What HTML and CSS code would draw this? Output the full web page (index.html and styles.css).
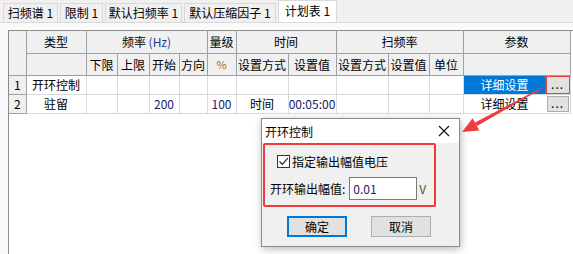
FILE: index.html
```html
<!DOCTYPE html>
<html lang="zh">
<head>
    <meta charset="UTF-8">
    <meta name="viewport" content="width=device-width, initial-scale=1.0">
    <title>计划表</title>
    <link rel="stylesheet" href="styles.css">
</head>
<body>
    <div class="tabs">
        <div class="tab t1">扫频谱 1</div>
        <div class="tab t2">限制 1</div>
        <div class="tab t3">默认扫频率 1</div>
        <div class="tab t4">默认压缩因子 1</div>
        <div class="tab t5 active">计划表 1</div>
    </div>

    <div class="panel">
        <div class="grid">
            <table class="sheet">
                <colgroup>
                    <col class="w-num">
                    <col class="w-type">
                    <col class="w-lo">
                    <col class="w-hi">
                    <col class="w-start">
                    <col class="w-dir">
                    <col class="w-lvl">
                    <col class="w-mode">
                    <col class="w-val">
                    <col class="w-mode">
                    <col class="w-val2">
                    <col class="w-unit">
                    <col class="w-param">
                </colgroup>
                <thead>
                    <tr class="hrow">
                        <th rowspan="2"></th>
                        <th>类型</th>
                        <th colspan="4">频率 <span class="hz">(Hz)</span></th>
                        <th>量级</th>
                        <th colspan="2">时间</th>
                        <th colspan="3">扫频率</th>
                        <th>参数</th>
                    </tr>
                    <tr class="hrow">
                        <th></th>
                        <th>下限</th>
                        <th>上限</th>
                        <th>开始</th>
                        <th>方向</th>
                        <th class="pct">%</th>
                        <th>设置方式</th>
                        <th>设置值</th>
                        <th>设置方式</th>
                        <th>设置值</th>
                        <th>单位</th>
                        <th></th>
                    </tr>
                </thead>
                <tbody>
                    <tr class="brow">
                        <td class="num">1</td>
                        <td>开环控制</td>
                        <td></td><td></td><td></td><td></td><td></td>
                        <td></td><td></td><td></td><td></td><td></td>
                        <td class="param">
                            <div class="param-in">
                                <span class="ptext selected">详细设置</span>
                                <span class="more marked">...</span>
                            </div>
                        </td>
                    </tr>
                    <tr class="brow">
                        <td class="num">2</td>
                        <td>驻留</td>
                        <td></td><td></td>
                        <td class="digits">200</td>
                        <td></td>
                        <td class="digits">100</td>
                        <td>时间</td>
                        <td class="digits">00:05:00</td>
                        <td></td><td></td><td></td>
                        <td class="param">
                            <div class="param-in">
                                <span class="ptext">详细设置</span>
                                <span class="more">...</span>
                            </div>
                        </td>
                    </tr>
                </tbody>
            </table>
        </div>
    </div>

    <!-- 弹出的对话框 -->
    <div class="dialog">
        <div class="dlg-title">
            <span>开环控制</span>
            <svg class="close" width="12" height="12" viewBox="0 0 12 12">
                <path d="M1 1 L11 11 M11 1 L1 11" stroke="#111" stroke-width="1.1" fill="none"/>
            </svg>
        </div>
        <div class="dlg-body">
            <div class="group">
                <div class="check">
                    <span class="box">
                        <svg width="11" height="11" viewBox="0 0 11 11">
                            <path d="M1.5 5.5 L4.3 8.3 L9.8 2.2" stroke="#222" stroke-width="1.2" fill="none"/>
                        </svg>
                    </span>
                    <span>指定输出幅值电压</span>
                </div>
                <div class="field">
                    <span>开环输出幅值:</span>
                    <span class="input">0.01</span>
                    <span class="volt">V</span>
                </div>
            </div>
            <div class="buttons">
                <span class="btn primary">确定</span>
                <span class="btn">取消</span>
            </div>
        </div>
    </div>

    <!-- 标注箭头 -->
    <svg class="arrow" width="573" height="254" viewBox="0 0 573 254">
        <polygon points="542.2,88.4 541.8,87.6 475,122.5 477,126.1" fill="#ef3b3b"/>
        <polygon points="462,132 479.4,130.4 472.6,118.2" fill="#ef3b3b"/>
    </svg>
</body>
</html>
```

FILE: styles.css
```css
* {
    box-sizing: border-box;
}
body {
    margin: 0;
    width: 573px;
    height: 254px;
    overflow: hidden;
    background-color: #f0f0f0;
    font-family: "Noto Sans CJK SC", "Noto Sans", sans-serif;
    font-size: 12px;
    color: #000;
    position: relative;
}

/* 标签页 */
.tabs {
    display: flex;
    gap: 2px;
    padding-left: 3px;
    height: 22px;
    align-items: flex-end;
}
.tab {
    height: 19px;
    line-height: 17px;
    text-align: center;
    background-color: #f0f0f0;
    border: 1px solid #d9d9d9;
    border-bottom: none;
}
.tab.active {
    height: 22px;
    line-height: 20px;
    background-color: #fff;
}
.t1 { width: 55px; }
.t2 { width: 43px; }
.t3 { width: 77px; }
.t4 { width: 92px; }
.t5 { width: 59px; }

.panel {
    background-color: #fafafa;
    border-top: 1px solid #d9d9d9;
    padding: 7px 0 0 8px;
    height: 232px;
}
.grid {
    background-color: #fff;
    height: 100%;
    border-left: 1px solid #8c8c8c;
    border-top: 1px solid #8c8c8c;
}

/* 表格 */
.sheet {
    border-collapse: collapse;
    table-layout: fixed;
    width: 561px;
}
.w-num { width: 17px; }
.w-type { width: 60px; }
.w-lo { width: 31px; }
.w-hi { width: 32px; }
.w-start { width: 30px; }
.w-dir { width: 28px; }
.w-lvl { width: 29px; }
.w-mode { width: 52px; }
.w-val { width: 48px; }
.w-val2 { width: 41px; }
.w-unit { width: 34px; }
.w-param { width: 107px; }

.sheet th {
    background-color: #f0f0f0;
    border: 1px solid #a0a0a0;
    font-weight: normal;
    height: 22px;
    padding: 0;
    white-space: nowrap;
    overflow: hidden;
}
.sheet thead tr:first-child th {
    border-top: none;
}
.sheet thead tr th:first-child {
    border-left: none;
}
.hz {
    color: #1c3f8c;
}
.pct {
    font-size: 11px;
    color: #b8660f;
}
.sheet td {
    border: 1px solid #dadada;
    height: 19px;
    padding: 0;
    text-align: center;
    white-space: nowrap;
    overflow: hidden;
}
.sheet td.num {
    background-color: #f0f0f0;
    border-color: #a0a0a0;
    border-left: none;
}
.digits {
    color: #1a2266;
}
.sheet td.param {
    padding: 0;
}
.param-in {
    display: flex;
    align-items: center;
    height: 18px;
}
.ptext {
    width: 82px;
    height: 18px;
    line-height: 18px;
    text-align: center;
}
.ptext.selected {
    background-color: #0078d7;
    color: #fff;
}
.more {
    width: 22px;
    height: 16px;
    margin-left: 1px;
    line-height: 12px;
    letter-spacing: 1px;
    background-color: #e1e1e1;
    border: 1px solid #adadad;
    text-align: center;
}
.more.marked {
    outline: 2px solid #ef3b3b;
    outline-offset: 0;
    border-color: #e1e1e1;
}

/* 对话框 */
.dialog {
    position: absolute;
    left: 261px;
    top: 118px;
    width: 199px;
    height: 129px;
    background-color: #f0f0f0;
    border: 1px solid #8a8a8a;
    box-shadow: 1px 2px 8px rgba(0,0,0,0.28);
}
.dlg-title {
    height: 24px;
    background-color: #fff;
    display: flex;
    align-items: center;
    justify-content: space-between;
    padding: 0 9px 0 3px;
}
.group {
    margin-left: 1px;
    width: 173px;
    height: 64px;
    border: 2px solid #ef3b3b;
    border-radius: 2px;
    padding: 9px 0 0 12px;
}
.check {
    display: flex;
    align-items: center;
    gap: 2px;
    height: 14px;
}
.box {
    width: 13px;
    height: 13px;
    border: 1px solid #333;
    background-color: #fff;
    display: flex;
    align-items: center;
    justify-content: center;
}
.field {
    display: flex;
    align-items: center;
    margin: 9px 0 0 -7px;
    gap: 2px;
}
.input {
    width: 68px;
    height: 23px;
    line-height: 21px;
    padding-left: 3px;
    border: 1px solid #7a7a7a;
    background-color: #fff;
    margin-left: 2px;
    color: #1a2266;
}
.volt {
    color: #6b4a10;
}
.buttons {
    display: flex;
    gap: 24px;
    margin: 9px 0 0 25px;
}
.btn {
    width: 60px;
    height: 21px;
    line-height: 19px;
    text-align: center;
    background-color: #e1e1e1;
    border: 1px solid #adadad;
}
.btn.primary {
    border: 2px solid #0078d7;
    line-height: 17px;
}

.arrow {
    position: absolute;
    left: 0;
    top: 0;
    pointer-events: none;
}
```
